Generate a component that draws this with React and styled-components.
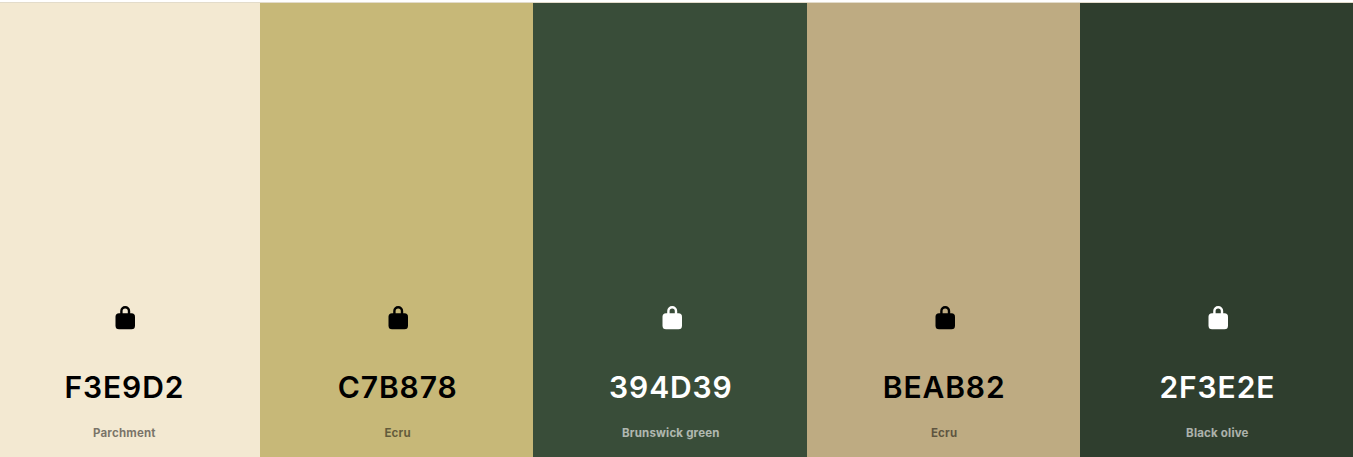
import React from 'react';
import styled, { createGlobalStyle } from 'styled-components';

const GlobalStyle = createGlobalStyle`
  html, body {
    margin: 0;
    padding: 0;
    background: #fff;
    font-family: Inter, "Liberation Sans", sans-serif;
  }
`;

const swatches = [
  { hex: 'F3E9D2', name: 'Parchment', light: false },
  { hex: 'C7B878', name: 'Ecru', light: false },
  { hex: '394D39', name: 'Brunswick green', light: true },
  { hex: 'BEAB82', name: 'Ecru', light: false },
  { hex: '2F3E2E', name: 'Black olive', light: true },
];

function LockIcon() {
  return (
    <svg width="24" height="24" viewBox="0 0 24 24" fill="currentColor">
      <path d="M7.2 9V5a5 5 0 0 1 10 0V9h-2.4V5a2.6 2.6 0 0 0-5.2 0V9z" />
      <rect x="2.5" y="7.3" width="19.5" height="16" rx="3.5" />
    </svg>
  );
}

export default function App() {
  return (
    <Page>
      <GlobalStyle />
      <Palette>
        {swatches.map((swatch, i) => (
          <Swatch key={i} $hex={swatch.hex} $light={swatch.light}>
            <LockButton>
              <LockIcon />
            </LockButton>
            <Hex>{swatch.hex}</Hex>
            <Name $light={swatch.light}>{swatch.name}</Name>
          </Swatch>
        ))}
      </Palette>
    </Page>
  );
}

const Page = styled.div`
  width: 1353px;
  height: 457px;
  overflow: hidden;
  display: flex;
  flex-direction: column;
  box-sizing: border-box;
  padding-top: 2px;
`;

const Palette = styled.div`
  flex: 1;
  display: flex;
  width: 1366.25px;
  margin-left: -13.25px;
  border-top: 1px solid #e3dccb;
`;

const Swatch = styled.div`
  flex: 1 1 0;
  box-sizing: border-box;
  display: flex;
  flex-direction: column;
  align-items: center;
  justify-content: flex-end;
  background: #${(p) => p.$hex};
  color: ${(p) => (p.$light ? '#fff' : '#000')};
  padding: 0 0 17px 2px;
`;

const LockButton = styled.div`
  display: flex;
  align-items: center;
  justify-content: center;
  height: 24px;
  margin: 0 0 39px 1.5px;
`;

const Hex = styled.div`
  font-size: 30px;
  font-weight: 600;
  line-height: 36px;
  letter-spacing: 0.9px;
  margin-bottom: 21px;
`;

const Name = styled.div`
  font-size: 11.5px;
  font-weight: 700;
  line-height: 14px;
  letter-spacing: 0.2px;
  opacity: ${(p) => (p.$light ? 0.6 : 0.5)};
`;
